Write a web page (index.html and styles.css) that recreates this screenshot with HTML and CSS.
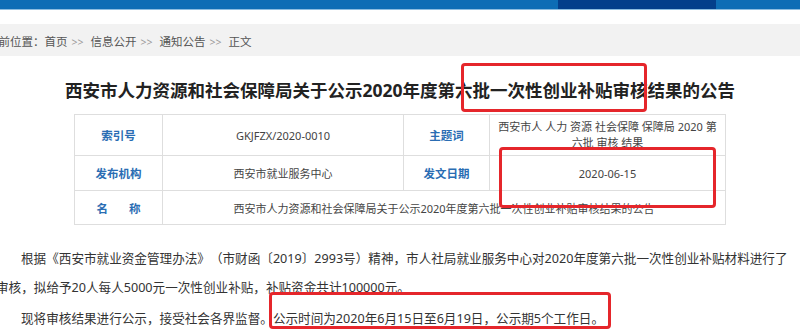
FILE: index.html
```html
<!DOCTYPE html>
<html lang="zh-CN">
<head>
<meta charset="utf-8">
<link rel="stylesheet" href="styles.css">
</head>
<body>
<div class="page">
  <div class="topbar"><div class="topbar-active"></div></div>
  <div class="crumbs"><span class="crumbs-inner">当前位置：<span class="link">首页</span><span class="sep">&gt;&gt;</span><span class="link">信息公开</span><span class="sep">&gt;&gt;</span><span class="link">通知公告</span><span class="sep">&gt;&gt;</span><span class="link">正文</span></span></div>
  <h1 class="title">西安市人力资源和社会保障局关于公示2020年度第六批一次性创业补贴审核结果的公告</h1>
  <table class="meta">
    <colgroup><col class="c1"><col class="c2"><col class="c3"><col class="c4"></colgroup>
    <tr class="r1">
      <th>索引号</th>
      <td>GKJFZX/2020-0010</td>
      <th>主题词</th>
      <td class="kw">西安市人 人力 资源 社会保障 保障局 2020 第<br>六批 审核 结果</td>
    </tr>
    <tr class="r2">
      <th>发布机构</th>
      <td>西安市就业服务中心</td>
      <th>发文日期</th>
      <td>2020-06-15</td>
    </tr>
    <tr class="r3">
      <th><span class="spaced">名称</span></th>
      <td colspan="3">西安市人力资源和社会保障局关于公示2020年度第六批一次性创业补贴审核结果的公告</td>
    </tr>
  </table>
  <div class="article">
    <p class="para"><span class="jline">根据《西安市就业资金管理办法》（市财函〔2019〕2993号）精神，市人社局就业服务中心对2020年度第六批一次性创业补贴材料进行了</span>审核，拟给予20人每人5000元一次性创业补贴，补贴资金共计100000元。</p>
    <p class="para">现将审核结果进行公示，接受社会各界监督。公示时间为2020年6月15日至6月19日，公示期5个工作日。</p>
  </div>
  <div class="mark mark-title"></div>
  <div class="mark mark-date"></div>
  <div class="mark mark-period"></div>
</div>
</body>
</html>
```
FILE: styles.css
```css
html, body {
  margin: 0;
  padding: 0;
  background: #ffffff;
}
body {
  font-family: "Noto Sans", "Noto Sans CJK SC", sans-serif;
  color: #333;
  text-spacing-trim: space-all;
}
.page {
  position: relative;
  width: 800px;
  height: 331px;
  overflow: hidden;
}
.topbar {
  height: 9px;
  background: #0d6db5;
  border-bottom: 1px solid #8cbde0;
  display: flex;
  padding-left: 558px;
}
.topbar-active {
  width: 158px;
  height: 9px;
  background: #033f8b;
}
.crumbs {
  margin-top: 14px;
  height: 28px;
  padding-top: 4px;
  line-height: 28px;
  background: #f2f2f2;
  font-size: 11.5px;
  color: #555;
  white-space: nowrap;
}
.crumbs-inner {
  display: inline-block;
  margin-left: -13px;
}
.crumbs .link {
  color: #555;
}
.crumbs .sep {
  color: #999;
  font-size: 10.5px;
  margin: 0 7px 0 4px;
}
.title {
  margin: 22px 0 0 0;
  height: 24px;
  line-height: 24px;
  font-size: 17.5px;
  font-weight: 700;
  color: #222;
  text-align: center;
  white-space: nowrap;
}
.meta {
  margin: 12px auto 0;
  width: 651px;
  border-collapse: collapse;
  table-layout: fixed;
  font-size: 11px;
  color: #444;
}
.meta .c1 { width: 88px; }
.meta .c2 { width: 241px; }
.meta .c3 { width: 86px; }
.meta .c4 { width: 236px; }
.meta th, .meta td {
  border: 1px solid #dedede;
  text-align: center;
  vertical-align: middle;
  padding: 0 4px;
}
.meta th {
  color: #2a6db3;
  font-size: 11.5px;
  font-weight: 700;
}
.meta .r1 { height: 41px; }
.meta .r2 { height: 35px; }
.meta .r3 { height: 34px; }
.meta .kw {
  line-height: 16px;
}
.spaced {
  letter-spacing: 21px;
  margin-right: -21px;
}
.article {
  margin: 19px 0 0 -4px;
  width: 796px;
  font-size: 12.6px;
  color: #333;
}
.para {
  margin: 0 0 2px 0;
  text-indent: 25px;
  line-height: 29px;
  white-space: nowrap;
}
.jline {
  display: block;
  width: 770px;
  text-align: justify;
  text-align-last: justify;
}
.mark {
  position: absolute;
  border: 3px solid #e5262b;
  border-radius: 4px;
  box-sizing: border-box;
}
.mark-title {
  left: 461px;
  top: 63px;
  width: 186px;
  height: 49px;
}
.mark-date {
  left: 499px;
  top: 147px;
  width: 217px;
  height: 61px;
}
.mark-period {
  left: 269px;
  top: 292px;
  width: 342px;
  height: 37px;
}
```
